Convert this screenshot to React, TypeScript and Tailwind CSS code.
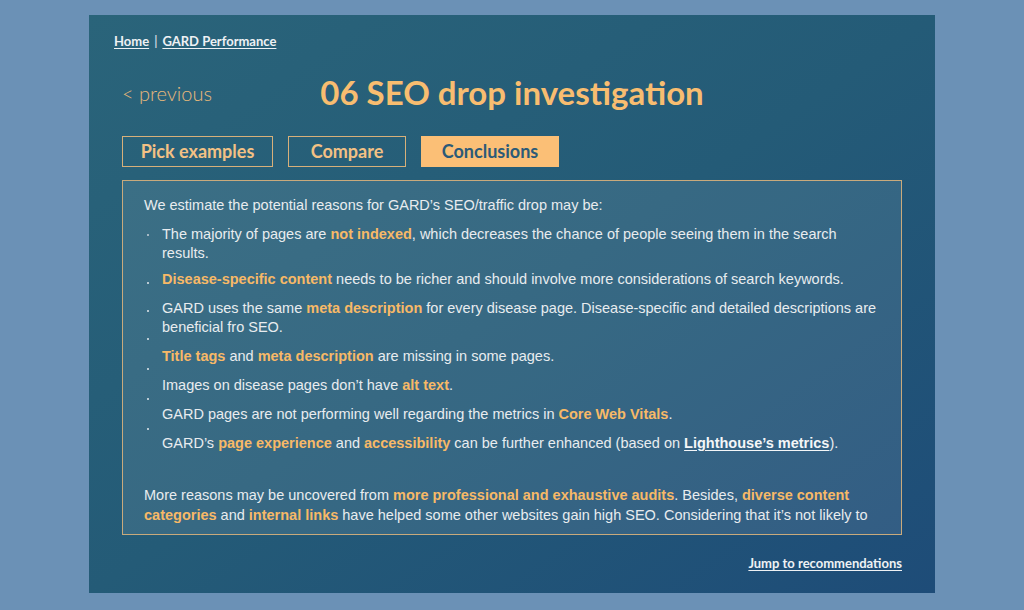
export default function App() {
  return (
    <div className="min-h-[610px] w-full bg-[#6b91b6] pt-[15px] font-['Liberation_Sans',Arial,sans-serif]">
      <div className="mx-auto h-[578px] w-[846px] bg-gradient-to-br from-[#2a647a] via-[#245b77] to-[#1e4c78]">
        {/* Breadcrumb */}
        <div className="px-[25px] pt-[18px] font-['Lato',sans-serif] text-[13px] leading-[16px] font-bold text-[#eef1f4]">
          <a className="underline underline-offset-2">Home</a>
          <span className="mx-[5px] font-normal">|</span>
          <a className="underline underline-offset-2">GARD Performance</a>
        </div>

        <div className="px-[33px]">
          {/* Header */}
          <div className="mt-[19px] grid h-[40px] grid-cols-[1fr_auto_1fr] items-center font-['Lato',sans-serif]">
            <a className="text-[20px] font-light text-[#e8b97b]">&lt; previous</a>
            <h1 className="text-[33px] font-bold text-[#f8bd70]">06 SEO drop investigation</h1>
            <div />
          </div>

          {/* Tabs */}
          <div className="mt-[28px] flex gap-[15px] font-['Lato',sans-serif] text-[18px] font-bold">
            <button className="h-[31px] w-[151px] border border-[#d7b07a] text-[#f3c184]">Pick examples</button>
            <button className="h-[31px] w-[118px] border border-[#d7b07a] text-[#f3c184]">Compare</button>
            <button className="h-[31px] w-[138px] border border-[#fbbf76] bg-[#fbbf76] text-[#2b5a78]">Conclusions</button>
          </div>

          {/* Conclusions box */}
          <div className="mt-[13px] h-[355px] border border-[#c9aa7c] bg-white/[0.09] text-[14.5px] text-[#e8ecef]">
            <div className="h-[344px] overflow-hidden pl-[21px] pr-[20px] pt-[15px]">
              <p className="leading-[19px]">We estimate the potential reasons for GARD’s SEO/traffic drop may be:</p>

              <div className="mt-[10px] flex leading-[19px]">
                <div className="flex w-[18px] shrink-0 flex-col pl-[3px]">
                  <span className="mt-[9px] h-[2px] w-[2px] rounded-full bg-[#c9d2da]" />
                  <span className="mt-[46px] h-[2px] w-[2px] rounded-full bg-[#e3e8ec]" />
                  <span className="mt-[26px] h-[2px] w-[2px] rounded-full bg-[#e3e8ec]" />
                  <span className="mt-[26px] h-[2px] w-[2px] rounded-full bg-[#e3e8ec]" />
                  <span className="mt-[28px] h-[2px] w-[2px] rounded-full bg-[#e3e8ec]" />
                  <span className="mt-[28px] h-[2px] w-[2px] rounded-full bg-[#e3e8ec]" />
                  <span className="mt-[28px] h-[2px] w-[2px] rounded-full bg-[#e3e8ec]" />
                </div>
                <ul className="flex-1">
                  <li>
                    The majority of pages are <Hl>not indexed</Hl>, which decreases the chance of people seeing them in the search results.
                  </li>
                  <li className="mt-[7px]">
                    <Hl>Disease-specific content</Hl> needs to be richer and should involve more considerations of search keywords.
                  </li>
                  <li className="mt-[10px]">
                    GARD uses the same <Hl>meta description</Hl> for every disease page. Disease-specific and detailed descriptions are beneficial fro SEO.
                  </li>
                  <li className="mt-[10px]">
                    <Hl>Title tags</Hl> and <Hl>meta description</Hl> are missing in some pages.
                  </li>
                  <li className="mt-[10px]">
                    Images on disease pages don’t have <Hl>alt text</Hl>.
                  </li>
                  <li className="mt-[10px]">
                    GARD pages are not performing well regarding the metrics in <Hl>Core Web Vitals</Hl>.
                  </li>
                  <li className="mt-[10px]">
                    GARD’s <Hl>page experience</Hl> and <Hl>accessibility</Hl> can be further enhanced (based on{' '}
                    <a className="font-bold text-[#f4f6f8] underline underline-offset-2">Lighthouse’s metrics</a>).
                  </li>
                </ul>
              </div>

              <p className="mt-[32px] leading-[20px]">
                More reasons may be uncovered from <Hl>more professional and exhaustive audits</Hl>. Besides, <Hl>diverse content categories</Hl> and{' '}
                <Hl>internal links</Hl> have helped some other websites gain high SEO. Considering that it’s not likely to
              </p>
            </div>
          </div>

          {/* Footer link */}
          <div className="mt-[20px] flex justify-end font-['Lato',sans-serif] text-[13px] leading-[16px] font-bold text-[#eef1f4]">
            <a className="underline underline-offset-2">Jump to recommendations</a>
          </div>
        </div>
      </div>
    </div>
  );
}

function Hl({ children }: { children: React.ReactNode }) {
  return <span className="font-bold text-[#f7b967]">{children}</span>;
}
